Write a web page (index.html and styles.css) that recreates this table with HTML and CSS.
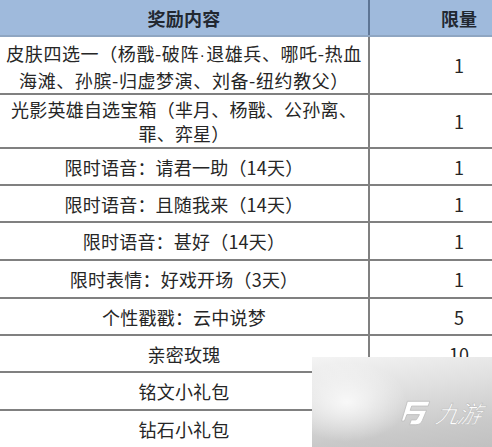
FILE: index.html
```html
<!DOCTYPE html>
<html lang="zh">
<head>
<meta charset="utf-8">
<link rel="stylesheet" href="styles.css">
</head>
<body>
<div class="page">
  <div class="table">
    <div class="row head h37">
      <div class="c1">奖励内容</div><div class="c2">限量</div>
    </div>
    <div class="row h58">
      <div class="c1 two wide">皮肤四选一（杨戬-破阵<span class="dot">·</span>退雄兵、哪吒-热血<br>海滩、孙膑-归虚梦演、刘备-纽约教父）</div><div class="c2">1</div>
    </div>
    <div class="row h54">
      <div class="c1 two">光影英雄自选宝箱（芈月、杨戬、公孙离、<br>罪、弈星）</div><div class="c2">1</div>
    </div>
    <div class="row h37">
      <div class="c1">限时语音：请君一助（14天）</div><div class="c2">1</div>
    </div>
    <div class="row h37">
      <div class="c1">限时语音：且随我来（14天）</div><div class="c2">1</div>
    </div>
    <div class="row h38">
      <div class="c1">限时语音：甚好（14天）</div><div class="c2">1</div>
    </div>
    <div class="row h38">
      <div class="c1">限时表情：好戏开场（3天）</div><div class="c2">1</div>
    </div>
    <div class="row h37">
      <div class="c1">个性戳戳：云中说梦</div><div class="c2">5</div>
    </div>
    <div class="row h37">
      <div class="c1">亲密玫瑰</div><div class="c2">10</div>
    </div>
    <div class="row h38">
      <div class="c1">铭文小礼包</div><div class="c2"></div>
    </div>
    <div class="row h38">
      <div class="c1">钻石小礼包</div><div class="c2"></div>
    </div>
  </div>
  <div class="mark">
    <div class="mark-bg"></div>
    <div class="logo">
      <svg class="logo-icon" width="32" height="26" viewBox="0 0 30 24">
        <path d="M6 1 L27 1 L25.5 5.5 L10 5.5 L8.6 9.5 L24 9.5 L20 19 Q18.5 23 14 23 L8 23 L9.6 18.5 L13.5 18.5 Q14.8 18.5 15.3 17 L17.3 13.5 L5.5 13.5 L3.2 19.5 L0.5 19.5 Z" fill="#ffffff" stroke="#bdbdbd" stroke-width="0.8" stroke-linejoin="round"/>
      </svg>
      <span class="logo-text">九游</span>
    </div>
  </div>
</div>
</body>
</html>
```

FILE: styles.css
```css
html, body {
  margin: 0;
  padding: 0;
  background: #ffffff;
  overflow: hidden;
}
.page {
  position: relative;
  width: 492px;
  height: 447px;
  overflow: hidden;
  font-family: "Microsoft YaHei", "Noto Sans CJK SC", "Noto Sans", sans-serif;
  color: #262626;
}
.table {
  width: 550px;
  display: flex;
  flex-direction: column;
}
.row {
  display: grid;
  grid-template-columns: 370px 180px;
  border-bottom: 2px solid #808080;
  box-sizing: border-box;
  font-size: 18px;
}
.row .c1 {
  border-right: 2px solid #808080;
  display: flex;
  align-items: center;
  justify-content: center;
  text-align: center;
  white-space: nowrap;
  letter-spacing: 0.2px;
}
.row .c2 {
  display: flex;
  align-items: center;
  justify-content: center;
  margin-left: -2px;
}
.row .two {
  display: block;
  padding-top: 4px;
  line-height: 24px;
}
.row .wide {
  letter-spacing: 0.6px;
}
.dot {
  font-family: "DejaVu Sans", sans-serif;
  font-size: 14px;
  padding: 0 1px;
}
.head {
  background: #9fbadc;
  font-weight: bold;
  color: #222831;
  border-bottom-color: #8fa6c2;
}
.head .c1 {
  border-right-color: #5d7595;
}
.h37 { height: 37px; }
.h38 { height: 38px; }
.h54 { height: 54px; }
.h58 { height: 58px; }
.h54 .two { padding-top: 2px; }
.mark {
  position: absolute;
  left: 312px;
  top: 357px;
  width: 190px;
  height: 100px;
}
.mark-bg {
  position: absolute;
  left: 0;
  top: 0;
  right: 0;
  bottom: 0;
  background:
    radial-gradient(ellipse 60px 40px at 35px 45px, rgba(255,255,255,0.8), rgba(255,255,255,0) 100%),
    linear-gradient(172deg, #f4f4f4 0%, #e0e0e0 35%, #c9c9c9 70%, #bdbdbd 100%);
}
.logo {
  position: absolute;
  left: 89px;
  top: 43px;
  display: flex;
  align-items: center;
  gap: 3px;
}
.logo-text {
  font-size: 24px;
  font-style: italic;
  color: #ffffff;
  letter-spacing: -2px;
  -webkit-text-stroke: 0.6px #bdbdbd;
  line-height: 24px;
  transform: skewX(-10deg);
}
```
